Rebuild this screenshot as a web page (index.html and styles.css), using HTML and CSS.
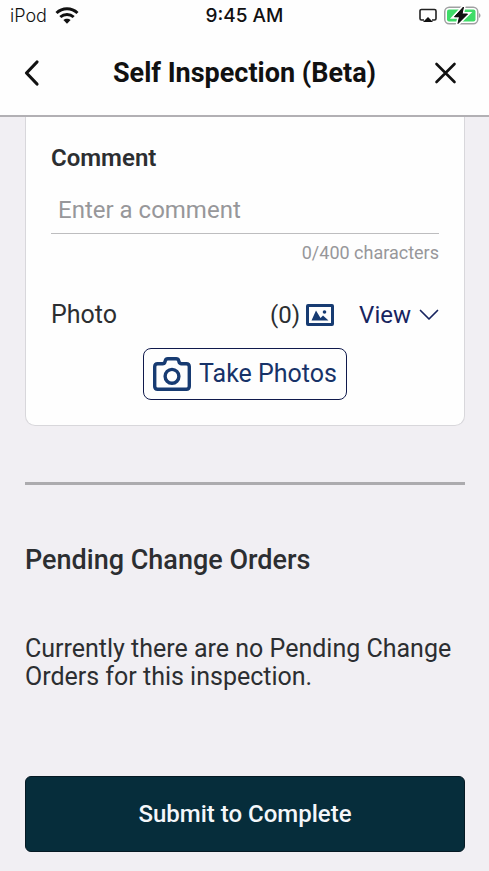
FILE: index.html
```html
<!DOCTYPE html>
<html lang="en">
<head>
<meta charset="utf-8">
<meta name="viewport" content="width=device-width, initial-scale=1">
<title>Self Inspection (Beta)</title>
<link rel="stylesheet" href="styles.css">
</head>
<body>
<div class="status">
  <div class="carrier">
    <span>iPod</span>
    <svg width="24" height="18" viewBox="0 0 24 18" fill="none" stroke="#111" stroke-width="3" aria-hidden="true">
      <path d="M1.500 6C7.500.4 16.500.4 22.500 6"/>
      <path d="M5.300 10C9.200 6.500 14.800 6.500 18.700 10"/>
      <path d="M12 16.700l-3.600-3.600c2-1.800 5.200-1.800 7.200 0z" fill="#111" stroke="none"/>
    </svg>
  </div>
  <div class="clock">9:45 AM</div>
  <div class="indicators">
    <svg width="18" height="16" viewBox="0 0 18 16" aria-hidden="true">
      <path d="M5 12H2.500a1.500 1.500 0 0 1-1.500-1.500V3a1.500 1.500 0 0 1 1.500-1.500h13a1.500 1.500 0 0 1 1.500 1.500V10.500a1.500 1.500 0 0 1-1.500 1.500h-2.500" fill="none" stroke="#222" stroke-width="1.600"/>
      <path d="M9 9l5 5H4z" fill="#111"/>
    </svg>
    <svg width="38" height="20" viewBox="0 0 38 20" aria-hidden="true">
      <rect x="1.750" y="1.250" width="33" height="16.500" rx="4.500" fill="#fff" stroke="#a0a0a2" stroke-width="1.500"/>
      <rect x="4" y="3.500" width="28.500" height="12" rx="2" fill="#3fdc68"/>
      <path d="M36 7c2 1 2 4 0 5z" fill="#a0a0a2"/>
      <path d="M20.500 1L11.500 10.800H16.500L15 17.500L24.500 8H19z" fill="#111" stroke="#fff" stroke-width="4" paint-order="stroke"/>
      <path d="M20.500 1L11.500 10.800H16.500L15 17.500L24.500 8H19z" fill="#111" stroke="#111" stroke-width="1" stroke-linejoin="round"/>
    </svg>
  </div>
</div>
<header class="header">
  <button class="icon-button" type="button" aria-label="Back">
    <svg width="28" height="28" viewBox="0 0 28 28" fill="none" stroke="#111" stroke-width="3.200" stroke-linecap="round" stroke-linejoin="round"><path d="M17 3L6.500 14L17 25"/></svg>
  </button>
  <h1 class="title">Self Inspection (Beta)</h1>
  <button class="icon-button close" type="button" aria-label="Close">
    <svg width="28" height="28" viewBox="0 0 28 28" fill="none" stroke="#111" stroke-width="2.600" stroke-linecap="round"><path d="M5.500 5L23.500 23M23.500 5L5.500 23"/></svg>
  </button>
</header>
<main class="content">
  <section class="card">
    <label class="comment-label" for="comment">Comment</label>
    <input class="comment-input" id="comment" type="text" maxlength="400" placeholder="Enter a comment">
    <div class="counter">0/400 characters</div>
    <div class="photo-row">
      <span class="photo-label">Photo</span>
      <span class="photo-count">(0)
        <svg width="28" height="22" viewBox="0 0 28 22" aria-hidden="true">
          <rect x="1.500" y="1.500" width="25" height="19" rx="0.500" fill="none" stroke="#173b72" stroke-width="3"/>
          <path d="M5.500 16.500L10 6.500L14.500 14L17 11.500L22.500 16.500z" fill="#173b72"/>
          <circle cx="18.500" cy="8" r="1.800" fill="#173b72"/>
        </svg>
      </span>
      <button class="view" type="button">View
        <svg width="20" height="12" viewBox="0 0 20 12" fill="none" stroke="#17245f" stroke-width="1.700" stroke-linecap="round" stroke-linejoin="round" aria-hidden="true"><path d="M1.500 1.500L10 10L18.500 1.500"/></svg>
      </button>
    </div>
    <button class="take" type="button">
      <svg width="38" height="34" viewBox="0 0 38 34" fill="none" stroke="#173b72" stroke-width="3.400" stroke-linejoin="round" aria-hidden="true">
        <path d="M4.700 6.700H9.500Q11.500 6.700 12 4.800L12.300 3.700Q12.800 1.700 14.800 1.700H23.200Q25.200 1.700 25.700 3.700L26 4.800Q26.500 6.700 28.500 6.700H33.300Q36.300 6.700 36.300 9.700V29.300Q36.300 32.300 33.300 32.300H4.700Q1.700 32.300 1.700 29.300V9.700Q1.700 6.700 4.700 6.700z"/>
        <circle cx="19" cy="19.300" r="6.900"/>
      </svg>
      Take Photos
    </button>
  </section>
  <hr class="divider">
  <section class="orders">
    <h2 class="orders-title">Pending Change Orders</h2>
    <p class="orders-text">Currently there are no Pending Change Orders for this inspection.</p>
  </section>
  <button class="submit" type="button">Submit to Complete</button>
</main>
</body>
</html>
```
FILE: styles.css
```css
* {
  box-sizing: border-box;
}

body {
  margin: 0;
  background: #f1eff3;
  color: #2c2e31;
  font-family: Roboto, "Liberation Sans", sans-serif;
  font-size: 24px;
  line-height: 28px;
}

button {
  margin: 0;
  padding: 0;
  border: 0;
  background: none;
  color: inherit;
  font: inherit;
  cursor: pointer;
}

svg {
  display: block;
  flex: none;
}

.status {
  display: grid;
  grid-template-columns: 1fr auto 1fr;
  align-items: center;
  height: 32px;
  padding: 0 8px;
  background: #fefefe;
  color: #111;
  font-family: Inter, "Liberation Sans", sans-serif;
  font-size: 18px;
  line-height: 32px;
}

.carrier,
.indicators {
  display: flex;
  align-items: center;
  gap: 8px;
}

.carrier {
  padding-left: 2px;
  font-weight: 300;
}

.clock {
  font-size: 19px;
  font-weight: 500;
}

.indicators {
  justify-content: flex-end;
  gap: 6px;
}

.header {
  display: grid;
  grid-template-columns: 1fr auto 1fr;
  align-items: center;
  height: 85px;
  padding: 0 20px 2px;
  border-bottom: 2px solid #b2b0b4;
  background: #fefefe;
  color: #111;
}

.close {
  justify-self: end;
  margin-right: 10px;
}

.title {
  margin: 0;
  font-size: 27px;
  font-weight: 700;
  line-height: 32px;
}

.content {
  padding: 0 24px 19px 25px;
}

.card {
  display: flex;
  flex-direction: column;
  padding: 27px 25px 25px;
  border: 1px solid #d8d7db;
  border-top: 0;
  border-radius: 0 0 10px 10px;
  background: #fefefe;
}

.comment-label {
  font-weight: 600;
}

.comment-input {
  width: 100%;
  height: 48px;
  margin-top: 14px;
  padding: 0 7px;
  border: 0;
  border-bottom: 1px solid #bdbdbf;
  outline: 0;
  background: transparent;
  color: inherit;
  font: inherit;
}

.comment-input::placeholder {
  color: #97979a;
  opacity: 1;
}

.counter {
  margin-top: 7px;
  color: #97979a;
  font-size: 18px;
  line-height: 24px;
  text-align: right;
}

.photo-row {
  display: flex;
  align-items: center;
  margin-top: 36px;
}

.photo-label {
  font-size: 25px;
}

.photo-count {
  display: flex;
  align-items: center;
  gap: 6px;
  margin-left: auto;
}

.view {
  display: flex;
  align-items: center;
  gap: 8px;
  margin-left: 25px;
  color: #17245f;
}

.take {
  display: flex;
  align-items: center;
  align-self: center;
  gap: 8px;
  height: 52px;
  margin-top: 19px;
  padding: 0 9px;
  border: 1px solid #101a4c;
  border-radius: 8px;
  color: #173268;
  font-size: 25px;
}

.divider {
  height: 3px;
  margin: 56px 0 0;
  border: 0;
  background: #acabae;
}

.orders-title {
  margin: 59px 0 0;
  font-size: 27px;
  font-weight: 500;
  line-height: 32px;
}

.orders-text {
  margin: 59px 0 0;
  font-size: 25px;
}

.submit {
  width: 100%;
  height: 76px;
  margin-top: 85px;
  border: 1px solid #051923;
  border-radius: 6px;
  background: #062d3b;
  color: #f4f7fa;
  font-weight: 500;
}
```
